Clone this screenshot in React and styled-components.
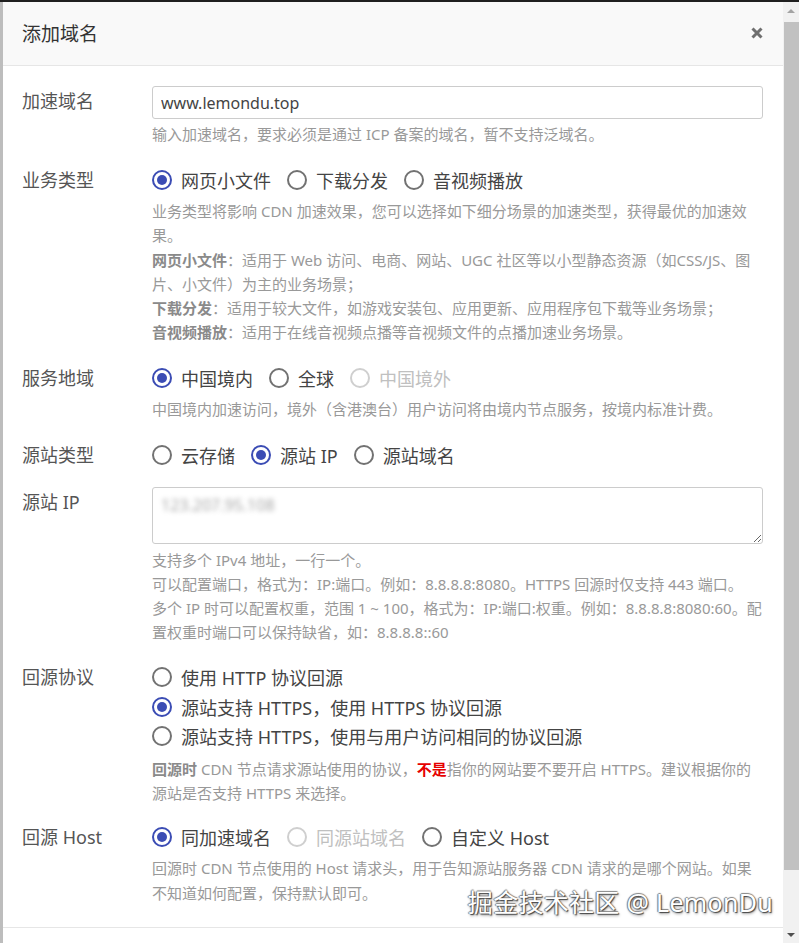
import React from "react";
import styled, { createGlobalStyle } from "styled-components";

const Global = createGlobalStyle`
  html, body { margin: 0; padding: 0; background: #fff; overflow: hidden; }
  body { font-family: "Noto Sans", "Noto Sans CJK SC", sans-serif; color: #555; }
  * { box-sizing: border-box; }
`;

const Page = styled.div`
  display: flex;
  flex-direction: column;
  width: 799px;
  height: 943px;
`;

const TopLine = styled.div`
  height: 2px;
  background: #1f1f1f;
  flex: none;
`;

const Main = styled.div`
  display: flex;
  flex: 1;
  min-height: 0;
`;

const LeftEdge = styled.div`
  width: 3px;
  background: #bdbdbd;
  flex: none;
`;

const Dialog = styled.div`
  position: relative;
  flex: 1;
  display: flex;
  flex-direction: column;
  background: #fff;
  overflow: hidden;
`;

const Header = styled.div`
  height: 64px;
  flex: none;
  display: flex;
  align-items: center;
  justify-content: space-between;
  padding: 0 20px 1px 19px;
  background: #f9f9f9;
  border-bottom: 1px solid #e6e6e6;
`;

const Title = styled.h4`
  margin: 0;
  font-size: 19px;
  font-weight: 400;
  color: #333;
`;

const Close = styled.button`
  border: 0;
  background: none;
  padding: 0;
  width: 12px;
  height: 12px;
  display: flex;
  cursor: pointer;
`;

const Body = styled.div`
  flex: none;
  display: flex;
  flex-direction: column;
  padding: 20px 20px 22px 19px;
`;

const Row = styled.div`
  display: grid;
  grid-template-columns: 130px 1fr;
  margin-top: ${(p) => p.$gap ?? 19}px;
  &:first-child { margin-top: 0; }
`;

const Label = styled.div`
  font-size: 18px;
  line-height: 30px;
  color: #555;
`;

const Control = styled.div`
  display: flex;
  flex-direction: column;
  min-width: 0;
`;

const TextInput = styled.input`
  height: 33px;
  border: 1px solid #ccc;
  border-radius: 3px;
  padding: 0 8px;
  font-family: "Noto Sans", "Noto Sans CJK SC", sans-serif;
  font-size: 16px;
  color: #444;
  outline: none;
`;

const TextArea = styled.textarea`
  height: 57px;
  border: 1px solid #ccc;
  border-radius: 3px;
  padding: 6px 8px;
  font-family: "Noto Sans", "Noto Sans CJK SC", sans-serif;
  font-size: 16px;
  color: transparent;
  text-shadow: 0 0 5px rgba(0, 0, 0, 0.35);
  outline: none;
  resize: vertical;
`;

const Help = styled.p`
  margin: ${(p) => p.$top ?? 4}px 0 0;
  font-size: 15px;
  line-height: 24.2px;
  color: #999;
  white-space: nowrap;
`;

const Strong = styled.b`
  font-weight: 700;
  color: ${(p) => (p.$red ? "#e60000" : "#8a8a8a")};
`;

const RadioGroup = styled.div`
  display: flex;
  flex-direction: ${(p) => (p.$vertical ? "column" : "row")};
  gap: ${(p) => (p.$vertical ? "0" : "16px")};
`;

const RadioItem = styled.label`
  display: flex;
  align-items: center;
  gap: 9px;
  height: ${(p) => (p.$tight ? 29.5 : 30)}px;
  font-size: 18px;
  color: ${(p) => (p.$disabled ? "#c0c0c0" : "#444")};
  cursor: ${(p) => (p.$disabled ? "default" : "pointer")};
`;

const Circle = styled.span`
  width: 20px;
  height: 20px;
  flex: none;
  border-radius: 50%;
  border: 2px solid
    ${(p) => (p.$disabled ? "#cfcfcf" : p.$checked ? "#3b4cb4" : "#727272")};
  display: flex;
  align-items: center;
  justify-content: center;
  &::after {
    content: "";
    width: 10px;
    height: 10px;
    border-radius: 50%;
    background: ${(p) => (p.$checked ? "#3b4cb4" : "transparent")};
  }
`;

const Footer = styled.div`
  flex: 1;
  border-top: 1px solid #e6e6e6;
`;

const Watermark = styled.div`
  position: absolute;
  right: 10px;
  bottom: 25px;
  font-family: "Noto Sans", "Noto Sans CJK SC", sans-serif;
  font-size: 25px;
  line-height: 32px;
  color: #fff;
  letter-spacing: 0.3px;
  text-shadow: 1px 1px 1px #444, -1px 0 1px #777, 0 -1px 1px #888, 1px 2px 3px rgba(0,0,0,0.35);
  pointer-events: none;
`;

const Scrollbar = styled.div`
  width: 16px;
  flex: none;
  display: flex;
  flex-direction: column;
  background: #f1f1f1;
`;

const Arrow = styled.div`
  height: 17px;
  flex: none;
  display: flex;
  align-items: center;
  justify-content: center;
  &::before {
    content: "";
    border-left: 4px solid transparent;
    border-right: 4px solid transparent;
    ${(p) =>
      p.$down
        ? "border-top: 4px solid #505050;"
        : "border-bottom: 4px solid #a3a3a3;"}
  }
`;

const Thumb = styled.div`
  margin: 3px 0 0 1px;
  height: 848px;
  background: #c1c1c1;
  flex: none;
`;

const Spacer = styled.div`
  flex: 1;
`;

function Radio({ label, checked, disabled, tight }) {
  return (
    <RadioItem $disabled={disabled} $tight={tight}>
      <Circle $checked={checked} $disabled={disabled} />
      <span>{label}</span>
    </RadioItem>
  );
}

export default function App() {
  return (
    <>
      <Global />
      <Page>
        <TopLine />
        <Main>
          <LeftEdge />
          <Dialog>
            <Header>
              <Title>添加域名</Title>
              <Close aria-label="关闭">
                <svg width="12" height="12" viewBox="0 0 12 12">
                  <path
                    d="M1.5 1.5 L10.5 10.5 M10.5 1.5 L1.5 10.5"
                    stroke="#6f6f6f"
                    strokeWidth="3"
                    strokeLinecap="butt"
                  />
                </svg>
              </Close>
            </Header>
            <Body>
              <Row>
                <Label>加速域名</Label>
                <Control>
                  <TextInput defaultValue="www.lemondu.top" />
                  <Help $top={3}>
                    输入加速域名，要求必须是通过 ICP 备案的域名，暂不支持泛域名。
                  </Help>
                </Control>
              </Row>
              <Row>
                <Label>业务类型</Label>
                <Control>
                  <RadioGroup>
                    <Radio label="网页小文件" checked />
                    <Radio label="下载分发" />
                    <Radio label="音视频播放" />
                  </RadioGroup>
                  <Help>
                    业务类型将影响 CDN 加速效果，您可以选择如下细分场景的加速类型，获得最优的加速效
                    <br />
                    果。
                    <br />
                    <Strong>网页小文件</Strong>：适用于 Web 访问、电商、网站、UGC 社区等以小型静态资源（如CSS/JS、图
                    <br />
                    片、小文件）为主的业务场景；
                    <br />
                    <Strong>下载分发</Strong>：适用于较大文件，如游戏安装包、应用更新、应用程序包下载等业务场景；
                    <br />
                    <Strong>音视频播放</Strong>：适用于在线音视频点播等音视频文件的点播加速业务场景。
                  </Help>
                </Control>
              </Row>
              <Row>
                <Label>服务地域</Label>
                <Control>
                  <RadioGroup>
                    <Radio label="中国境内" checked />
                    <Radio label="全球" />
                    <Radio label="中国境外" disabled />
                  </RadioGroup>
                  <Help>
                    中国境内加速访问，境外（含港澳台）用户访问将由境内节点服务，按境内标准计费。
                  </Help>
                </Control>
              </Row>
              <Row $gap={18}>
                <Label>源站类型</Label>
                <Control>
                  <RadioGroup>
                    <Radio label="云存储" />
                    <Radio label="源站 IP" checked />
                    <Radio label="源站域名" />
                  </RadioGroup>
                </Control>
              </Row>
              <Row $gap={17}>
                <Label>源站 IP</Label>
                <Control>
                  <TextArea defaultValue="123.207.95.108" />
                  <Help>
                    支持多个 IPv4 地址，一行一个。
                    <br />
                    可以配置端口，格式为：IP:端口。例如：8.8.8.8:8080。HTTPS 回源时仅支持 443 端口。
                    <br />
                    多个 IP 时可以配置权重，范围 1 ~ 100，格式为：IP:端口:权重。例如：8.8.8.8:8080:60。配
                    <br />
                    置权重时端口可以保持缺省，如：8.8.8.8::60
                  </Help>
                </Control>
              </Row>
              <Row $gap={18}>
                <Label>回源协议</Label>
                <Control>
                  <RadioGroup $vertical>
                    <Radio tight label="使用 HTTP 协议回源" />
                    <Radio tight label="源站支持 HTTPS，使用 HTTPS 协议回源" checked />
                    <Radio tight label="源站支持 HTTPS，使用与用户访问相同的协议回源" />
                  </RadioGroup>
                  <Help $top={6}>
                    <Strong>回源时</Strong> CDN 节点请求源站使用的协议，<Strong $red>不是</Strong>指你的网站要不要开启 HTTPS。建议根据你的
                    <br />
                    源站是否支持 HTTPS 来选择。
                  </Help>
                </Control>
              </Row>
              <Row $gap={17}>
                <Label>回源 Host</Label>
                <Control>
                  <RadioGroup>
                    <Radio label="同加速域名" checked />
                    <Radio label="同源站域名" disabled />
                    <Radio label="自定义 Host" />
                  </RadioGroup>
                  <Help>
                    回源时 CDN 节点使用的 Host 请求头，用于告知源站服务器 CDN 请求的是哪个网站。如果
                    <br />
                    不知道如何配置，保持默认即可。
                  </Help>
                </Control>
              </Row>
            </Body>
            <Footer />
            <Watermark>掘金技术社区 @ LemonDu</Watermark>
          </Dialog>
          <Scrollbar>
            <Arrow />
            <Thumb />
            <Spacer />
            <Arrow $down />
          </Scrollbar>
        </Main>
      </Page>
    </>
  );
}
